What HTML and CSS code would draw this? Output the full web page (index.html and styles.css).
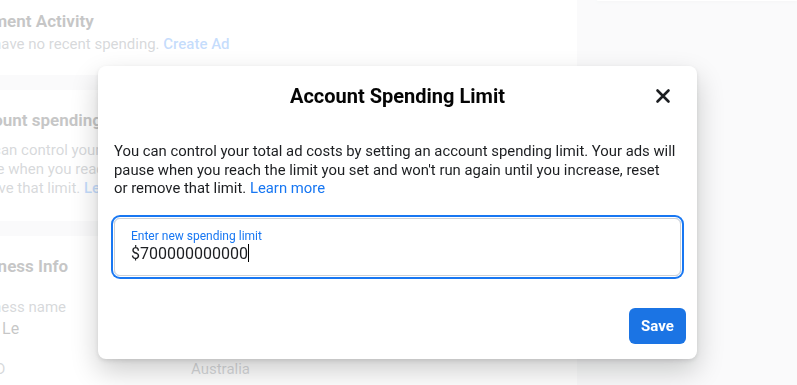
FILE: index.html
```html
<html>
	<head>
		<title>Billing - Account Spending Limit</title>
		<meta name="viewport" content="width=device-width, initial-scale=1">
		<link rel="stylesheet" href="styles.css">
	</head>
	<body>
		<div class="page">
			<div class="leftCol">
				<div class="card cardPayment">
					<h2 class="cardTitle">Payment Activity</h2>
					<p class="cardText">You have no recent spending. <a class="link">Create Ad</a></p>
				</div>
				<div class="card cardLimit">
					<h2 class="cardTitle">Account spending limit</h2>
					<p class="cardText cardTextLimit">You can control your total ad costs by setting an account spending limit. Your ads will pause when you reach the limit you set and won't run again until you increase, reset or remove that limit. <a class="link">Learn more</a></p>
				</div>
				<div class="card cardBusiness">
					<h2 class="cardTitle">Business Info</h2>
					<p class="fieldLabel">Business name</p>
					<p class="fieldValue">Nam Le</p>
					<div class="fieldRow">
						<span class="fieldLabel">Tax ID</span>
						<span class="fieldLabel">Australia</span>
					</div>
				</div>
			</div>
			<div class="rightCol">
				<div class="card cardStub"></div>
			</div>
		</div>

		<div class="overlay">
			<div class="modal">
				<div class="modalHeader">
					<h1 class="modalTitle">Account Spending Limit</h1>
					<button class="closeButton" aria-label="Close">
						<svg width="16" height="16" viewBox="0 0 16 16">
							<path d="M2.5 2.5 L13.5 13.5 M13.5 2.5 L2.5 13.5" stroke="#1c1e21" stroke-width="2.6" stroke-linecap="round" fill="none"/>
						</svg>
					</button>
				</div>
				<div class="modalBody">
					<p class="modalText">You can control your total ad costs by setting an account spending limit. Your ads will pause when you reach the limit you set and won't run again until you increase, reset or&nbsp;remove that limit. <a class="link linkPlain">Learn more</a></p>
					<div class="inputBox">
						<div class="inputLabel">Enter new spending limit</div>
						<div class="inputValue">$700000000000<span class="caret"></span></div>
					</div>
				</div>
				<div class="modalFooter">
					<button class="button buttonBlue">Save</button>
				</div>
			</div>
		</div>
	</body>
</html>
```

FILE: styles.css
```css
html{font-family: Roboto, "Helvetica Neue", Helvetica, Arial, sans-serif;}
body{margin: 0; background-color: #e9ebee; overflow: hidden; height: 385px; color: #1c1e21;}
p{margin: 0;}
h1, h2{margin: 0;}
.link{color: #1877f2; font-weight: 500; cursor: pointer;}
.linkPlain{font-weight: normal;}

/* page behind the dialog */
.page{display: flex; margin-left: -52px; height: 385px;}
.leftCol{width: 629px; display: flex; flex-direction: column; gap: 15px;}
.rightCol{flex: 1; margin-left: 20px;}
.card{background-color: #ffffff; padding: 0 16px;}
.cardStub{height: 1px; box-shadow: 0 1px 3px rgba(0,0,0,0.15); border-radius: 0 0 6px 6px;}
.cardTitle{font-size: 17px; line-height: 22px; font-weight: bold;}
.cardText{font-size: 15px; line-height: 19px; color: #606770;}
.cardPayment{padding-top: 10px; padding-bottom: 21px;}
.cardPayment .cardText{margin-top: 3px;}
.cardLimit{padding-top: 19px; padding-bottom: 23px;}
.cardTextLimit{margin-top: 10px; width: 596px;}
.cardBusiness{padding-top: 19px; flex: 1;}
.fieldLabel{font-size: 15px; line-height: 19px; color: #606770;}
.cardBusiness > .fieldLabel{margin-top: 21px;}
.fieldValue{font-size: 16px; line-height: 20px; color: #1c1e21; margin-top: 2px;}
.fieldRow{display: grid; grid-template-columns: 227px 1fr; margin-top: 21px;}

/* dialog */
.overlay{position: fixed; top: 0; left: 0; right: 0; bottom: 0; background-color: rgba(255,255,255,0.75); display: flex; align-items: flex-start; padding: 66px 0 0 98px;}
.modal{width: 599px; background-color: #ffffff; border-radius: 8px;
	box-shadow: 0 12px 28px 0 rgba(0,0,0,0.2), 0 2px 4px 0 rgba(0,0,0,0.1);}
.modalHeader{height: 60px; display: flex; align-items: center; justify-content: center; position: relative;}
.modalTitle{font-size: 20px; font-weight: bold; color: #050505;}
.closeButton{position: absolute; right: 16px; top: 12px; width: 36px; height: 36px; border: none; border-radius: 50%;
	background: none; display: flex; align-items: center; justify-content: center; padding: 0; cursor: pointer;}
.modalBody{padding: 16px 16px 0;}
.modalText{font-size: 14.85px; line-height: 18.67px; color: #1c1e21;}
.inputBox{margin-top: 20px; height: 58px; box-sizing: border-box; border: 1px solid #ccd0d5; border-radius: 6px;
	padding: 9px 16px 0; box-shadow: 0 0 0 1px #ffffff, 0 0 0 3px #1877f2;}
.inputLabel{font-size: 12px; line-height: 16px; color: #1877f2;}
.inputValue{font-size: 16px; line-height: 20px; color: #1c1e21;}
.caret{display: inline-block; width: 1px; height: 18px; background-color: #000000; vertical-align: -3px;}
.modalFooter{display: flex; justify-content: flex-end; padding: 32px 11px 15px;}
.button{display: inline-block; border: none; border-radius: 6px; color: white; height: 36px; min-width: 57px;
	padding: 0 12px; font-family: Roboto, Helvetica, sans-serif; font-size: 15px; font-weight: bold; cursor: pointer;}
.buttonBlue{background-color: #1b74e4;}
```
